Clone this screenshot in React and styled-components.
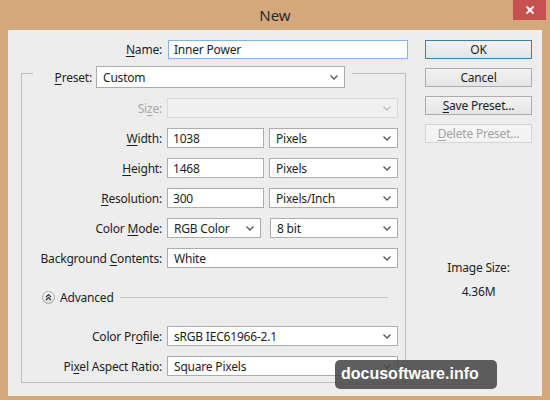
import React from "react";
import styled, { createGlobalStyle } from "styled-components";

const Global = createGlobalStyle`
  html, body { margin: 0; padding: 0; }
  body {
    width: 550px; height: 400px; overflow: hidden;
    font-family: "Noto Sans", "DejaVu Sans", sans-serif;
    font-size: 12px; color: #1e1e1e;
    letter-spacing: -0.2px;
  }
  * { box-sizing: border-box; }
`;

const Window = styled.div`
  position: relative;
  width: 550px; height: 400px;
  background: #d4a87b;
  display: flex; flex-direction: column;
`;

const TitleBar = styled.div`
  position: relative;
  height: 30px;
  display: flex; align-items: center; justify-content: center;
  font-size: 15px; color: #2a2a2a;
  letter-spacing: 0;
  padding-bottom: 1px;
`;

const CloseBtn = styled.div`
  position: absolute; top: 0; right: 4px;
  width: 33px; height: 20px;
  background: #c75050;
  display: flex; align-items: center; justify-content: center;
`;

const Client = styled.div`
  flex: 1;
  margin: 0 8px 4px 8px;
  background: #ededed;
  display: flex;
  padding-top: 10px;
`;

const LeftCol = styled.div`
  width: 400px;
  display: flex; flex-direction: column;
`;

const RightCol = styled.div`
  width: 107px;
  margin-left: 17px;
  display: flex; flex-direction: column;
  gap: 9px;
`;

const NameRow = styled.div`
  display: flex; align-items: center;
  height: 19px;
  gap: 6px;
`;

const Label = styled.label`
  width: ${p => p.$w || 140}px;
  text-align: right;
  white-space: nowrap;
  color: ${p => (p.$disabled ? "#a8a8a8" : "#1e1e1e")};
  line-height: 15px;
`;

const U = styled.span`
  text-decoration: underline;
  text-underline-offset: 2px;
`;

const TextInput = styled.div`
  width: ${p => p.$w}px;
  height: ${p => p.$h || 20}px;
  background: #fff;
  border: 1px solid ${p => (p.$focus ? "#7eb4ea" : "#abadb3")};
  padding-left: 5px;
  display: flex; align-items: center;
  line-height: 15px;
`;

const SelectBox = styled.div`
  width: ${p => p.$w}px;
  height: ${p => p.$h || 20}px;
  background: ${p => (p.$disabled ? "#f0f0f0" : "#fff")};
  border: 1px solid ${p => (p.$disabled ? "#d9d9d9" : "#acacac")};
  padding: 0 6px 0 6px;
  display: flex; align-items: center; justify-content: space-between;
  line-height: 15px;
`;

const Group = styled.fieldset`
  margin: -1px 0 0 13px;
  padding: 0 7px 6px 0;
  width: 385px;
  border: 1px solid #bcbcbc;
  min-width: 0;
`;

const Legend = styled.legend`
  margin-left: 11px;
  padding: 8px 7px 0 19px;
  display: flex; align-items: center; gap: 4px;
`;

const Rows = styled.div`
  display: flex; flex-direction: column;
  gap: 10px;
  padding-top: 10px;
`;

const Row = styled.div`
  display: flex; align-items: center;
  height: 20px;
  gap: ${p => p.$gap || 5}px;
`;

const Pair = styled.div`
  display: flex; gap: ${p => p.$gap}px;
`;

const AdvancedRow = styled.div`
  display: flex; align-items: center;
  height: 20px;
  margin: 9px 0;
  padding-left: 20px;
`;

const AdvText = styled.span`
  margin-left: 5px;
  line-height: 15px;
`;

const AdvLine = styled.div`
  flex: 1;
  height: 1px;
  background: #c4c4c4;
  margin: 1px 10px 0 6px;
`;

const Button = styled.div`
  width: 107px; height: 19px;
  border: 1px solid ${p => (p.$default ? "#3c7fb1" : p.$disabled ? "#d5d5d5" : "#acacac")};
  background: ${p => (p.$disabled ? "#f4f4f4" : "linear-gradient(#f2f2f2, #e5e5e5)")};
  color: ${p => (p.$disabled ? "#a3a3a3" : "#1e1e1e")};
  display: flex; align-items: center; justify-content: center;
  line-height: 15px;
`;

const InfoLabel = styled.div`
  text-align: center;
  line-height: 15px;
  margin-top: ${p => p.$mt}px;
`;

const InfoBlock = styled.div`
  display: flex; flex-direction: column;
`;

const Watermark = styled.div`
  position: absolute; left: 335px; top: 360px;
  width: 162px; height: 29px;
  border-radius: 5px;
  background: rgba(72, 72, 72, 0.88);
  color: #fff;
  font-family: "Liberation Sans", Arial, sans-serif;
  font-weight: bold;
  font-size: 16px;
  letter-spacing: 0;
  display: flex; align-items: center;
  padding-left: 6px;
  padding-bottom: 1px;
`;

const Chevron = ({ light }) => (
  <svg width="8" height="5" viewBox="0 0 8 5">
    <polyline points="0.5,0.5 4,4 7.5,0.5" fill="none" stroke={light ? "#c0c0c0" : "#555"} strokeWidth="1.3" />
  </svg>
);

const Select = ({ w, h, children, disabled }) => (
  <SelectBox $w={w} $h={h} $disabled={disabled}>
    <span>{children}</span>
    <Chevron light={disabled} />
  </SelectBox>
);

const AdvIcon = () => (
  <svg width="13" height="13" viewBox="0 0 13 13">
    <defs>
      <linearGradient id="ag" x1="0" y1="0" x2="0" y2="1">
        <stop offset="0" stopColor="#ffffff" />
        <stop offset="1" stopColor="#d8d8d8" />
      </linearGradient>
    </defs>
    <circle cx="6.5" cy="6.5" r="6" fill="url(#ag)" stroke="#a6a6a6" />
    <polyline points="4,6 6.5,3.6 9,6" fill="none" stroke="#333" strokeWidth="1.2" />
    <polyline points="4,9 6.5,6.6 9,9" fill="none" stroke="#333" strokeWidth="1.2" />
  </svg>
);

export default function App() {
  return (
    <>
      <Global />
      <Window>
        <TitleBar>
          New
          <CloseBtn>
            <svg width="10" height="10" viewBox="0 0 10 10">
              <path d="M1.5 1.5 L8.5 8.5 M8.5 1.5 L1.5 8.5" stroke="#fff" strokeWidth="1.8" />
            </svg>
          </CloseBtn>
        </TitleBar>
        <Client>
          <LeftCol>
            <NameRow>
              <Label $w={154}><U>N</U>ame:</Label>
              <TextInput $w={240} $h={19} $focus>Inner Power</TextInput>
            </NameRow>
            <Group>
              <Legend>
                <Label $w={40}><U>P</U>reset:</Label>
                <Select w={249} h={22}>Custom</Select>
              </Legend>
              <Rows>
                <Row>
                  <Label $disabled>Si<U>z</U>e:</Label>
                  <Select w={231} disabled />
                </Row>
                <Row>
                  <Label><U>W</U>idth:</Label>
                  <Pair $gap={5}>
                    <TextInput $w={97}>1038</TextInput>
                    <Select w={129}>Pixels</Select>
                  </Pair>
                </Row>
                <Row>
                  <Label><U>H</U>eight:</Label>
                  <Pair $gap={5}>
                    <TextInput $w={97}>1468</TextInput>
                    <Select w={129}>Pixels</Select>
                  </Pair>
                </Row>
                <Row>
                  <Label><U>R</U>esolution:</Label>
                  <Pair $gap={5}>
                    <TextInput $w={97}>300</TextInput>
                    <Select w={129}>Pixels/Inch</Select>
                  </Pair>
                </Row>
                <Row>
                  <Label>Color <U>M</U>ode:</Label>
                  <Pair $gap={9}>
                    <Select w={94}>RGB Color</Select>
                    <Select w={128}>8 bit</Select>
                  </Pair>
                </Row>
                <Row>
                  <Label>Background <U>C</U>ontents:</Label>
                  <Select w={231}>White</Select>
                </Row>
                <AdvancedRow>
                  <AdvIcon />
                  <AdvText>Advanced</AdvText>
                  <AdvLine />
                </AdvancedRow>
                <Row>
                  <Label>Color Pr<U>o</U>file:</Label>
                  <Select w={231}>sRGB IEC61966-2.1</Select>
                </Row>
                <Row>
                  <Label>Pi<U>x</U>el Aspect Ratio:</Label>
                  <Select w={231}>Square Pixels</Select>
                </Row>
              </Rows>
            </Group>
          </LeftCol>
          <RightCol>
            <Button $default>OK</Button>
            <Button>Cancel</Button>
            <Button><span><U>S</U>ave Preset...</span></Button>
            <Button $disabled><span><U>D</U>elete Preset...</span></Button>
            <InfoBlock>
              <InfoLabel $mt={108}>Image Size:</InfoLabel>
              <InfoLabel $mt={9}>4.36M</InfoLabel>
            </InfoBlock>
          </RightCol>
        </Client>
        <Watermark>docusoftware.info</Watermark>
      </Window>
    </>
  );
}
